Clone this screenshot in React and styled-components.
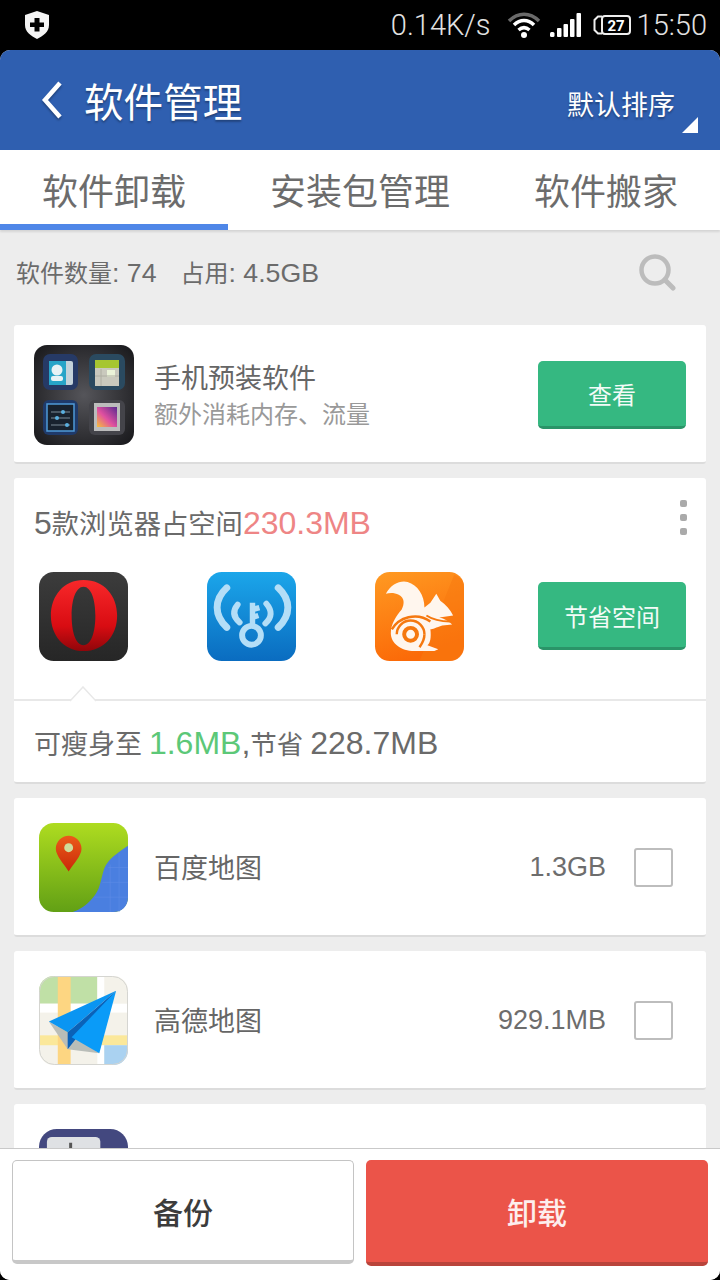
import React from 'react';
import styled, { createGlobalStyle } from 'styled-components';

const GlobalStyle = createGlobalStyle`
    html, body {
        margin: 0;
        padding: 0;
        background: #000;
    }
    * {
        box-sizing: border-box;
    }
`;

const Screen = styled.div`
    width: 720px;
    height: 1280px;
    background: #000;
    display: flex;
    flex-direction: column;
    overflow: hidden;
    font-family: "Liberation Sans", "Noto Sans CJK SC", sans-serif;
`;

const StatusBar = styled.div`
    height: 50px;
    flex: none;
    display: flex;
    align-items: center;
    padding: 0 13px 0 24px;
    color: #e2e2e2;
`;

const StatusText = styled.span`
    font-family: "Roboto", sans-serif;
    font-size: 29px;
    font-weight: 300;
    line-height: 50px;
    margin: ${(p) => p.$margin || '0'};
`;

const StatusIcon = styled.svg`
    display: block;
    flex: none;
    margin: ${(p) => p.$margin || '0'};
`;

const Spacer = styled.div`
    flex: 1;
`;

const Main = styled.div`
    flex: 1;
    min-height: 0;
    display: flex;
    flex-direction: column;
    border-radius: 10px;
    overflow: hidden;
    background: #ededed;
`;

const Header = styled.header`
    height: 100px;
    flex: none;
    background: #2f5fb0;
    display: flex;
    align-items: center;
    padding: 0 22px 0 40px;
    color: #fff;
`;

const BackIcon = styled.svg`
    display: block;
    flex: none;
    filter: drop-shadow(0 2px 1px rgba(0, 0, 0, 0.3));
`;

const Title = styled.h1`
    margin: 6px 0 0 20px;
    font-size: 39.6px;
    font-weight: 400;
    line-height: 94px;
    text-shadow: 0 2px 2px rgba(0, 0, 0, 0.3);
`;

const SortLabel = styled.span`
    font-size: 27px;
    line-height: 36px;
    margin: 12px 7px 0 0;
    text-shadow: 0 2px 2px rgba(0, 0, 0, 0.3);
`;

const SortArrow = styled.svg`
    display: block;
    flex: none;
    margin-top: 50px;
`;

const Tabs = styled.nav`
    position: relative;
    height: 80px;
    flex: none;
    background: #fff;
    display: grid;
    grid-template-columns: 228px 264px 228px;
    box-shadow: 0 2px 2px rgba(0, 0, 0, 0.1);
`;

const Tab = styled.div`
    height: 80px;
    display: flex;
    align-items: center;
    justify-content: center;
    padding-top: 4px;
    font-size: 36px;
    color: #6c6c6c;
    border-bottom: 6px solid ${(p) => (p.$active ? '#4f87e8' : 'transparent')};
`;

const Content = styled.div`
    flex: 1;
    min-height: 0;
    overflow: hidden;
    padding: 0 14px;
    display: flex;
    flex-direction: column;
    gap: 14px;
`;

const Summary = styled.div`
    height: 81px;
    flex: none;
    display: flex;
    align-items: center;
    padding: 2px 30px 0 2px;
    color: #6b6b6b;
    font-size: 26.7px;
`;

const SummaryItem = styled.span`
    margin-right: 24px;
`;

const Cn = styled.span`
    font-size: ${(p) => p.$size}px;
`;

const Card = styled.section`
    flex: none;
    background: #fff;
    border-radius: 3px;
    border-bottom: 2px solid #dcdcdc;
`;

const Row = styled.div`
    height: 137px;
    display: flex;
    align-items: center;
    padding: 2px 33px 0 25px;
`;

const PreRow = styled(Row)`
    padding: 2px 20px 0 20px;
`;

const AppIcon = styled.svg`
    display: block;
    flex: none;
`;

const RowBody = styled.div`
    flex: 1;
    min-width: 0;
    margin-left: ${(p) => p.$left}px;
    padding-top: ${(p) => p.$top || 0}px;
`;

const RowTitle = styled.div`
    font-size: 27px;
    line-height: 38px;
    color: #666;
`;

const RowSub = styled.div`
    font-size: 24px;
    line-height: 34px;
    color: #999;
`;

const Size = styled.span`
    font-size: 27px;
    color: #6d6d6d;
    margin-right: 28px;
`;

const Check = styled.span`
    display: block;
    flex: none;
    width: 39px;
    height: 39px;
    border: 2px solid #bdbdbd;
    border-radius: 3px;
    background: #fff;
`;

const GreenButton = styled.button`
    flex: none;
    width: 148px;
    height: 68px;
    padding: 1px 0 0;
    border: 0;
    border-bottom: 3px solid #2a9468;
    border-radius: 5px;
    background: #35b881;
    color: #f3fbf7;
    font-family: inherit;
    font-size: 24px;
`;

const BrowserHead = styled.div`
    height: 94px;
    display: flex;
    align-items: center;
    justify-content: space-between;
    padding: 0 19px 0 20px;
    font-size: 32px;
    color: #6a6a6a;
`;

const HeadText = styled.span`
    margin-top: -6px;
`;

const Pink = styled.span`
    color: #ee8585;
`;

const Green = styled.span`
    color: #5cc878;
`;

const Dots = styled.div`
    display: flex;
    flex-direction: column;
    gap: 7px;
    margin-top: -16px;
`;

const Dot = styled.span`
    display: block;
    width: 7px;
    height: 7px;
    border-radius: 2px;
    background: #aaa;
`;

const BrowserIcons = styled.div`
    height: 127px;
    display: flex;
    align-items: flex-start;
    padding: 0 20px 0 25px;
    gap: 79px;
`;

const BrowserButton = styled(GreenButton)`
    margin: 10px 0 0 -5px;
`;

const SaveRow = styled.div`
    position: relative;
    height: 83px;
    display: flex;
    align-items: center;
    padding: 2px 20px 0;
    border-top: 2px solid #e8e8e8;
    font-size: 32px;
    color: #6a6a6a;
    word-spacing: -2px;
`;

const Notch = styled.svg`
    position: absolute;
    left: 56px;
    top: -15px;
    display: block;
`;

const BottomBar = styled.div`
    height: 132px;
    flex: none;
    background: #fff;
    border-top: 1px solid #c9c9c9;
    display: grid;
    grid-template-columns: 342px 342px;
    gap: 12px;
    padding: 11px 12px 0;
    align-items: start;
`;

const BackupButton = styled.button`
    height: 104px;
    border: 1px solid #c4c4c4;
    border-bottom: 4px solid #c8c8c8;
    border-radius: 5px;
    background: #fff;
    color: #3c3c3c;
    font-family: inherit;
    font-size: 30px;
    font-weight: 500;
`;

const RemoveButton = styled.button`
    height: 106px;
    border: 0;
    border-bottom: 4px solid #b9443b;
    border-radius: 5px;
    background: #eb5449;
    color: #fdeeed;
    font-family: inherit;
    font-size: 30px;
    font-weight: 500;
`;

const SearchIcon = styled.svg`
    display: block;
    flex: none;
`;

const Shield = () => (
    <StatusIcon width="26" height="28" viewBox="0 0 26 28">
        <path d="M13 0 L25 4 V14 C25 21 19 25 13 28 C7 25 1 21 1 14 V4 Z" fill="#f4f4f4" />
        <path d="M10.5 7 H15.5 V11.5 H20 V16 H15.5 V20.5 H10.5 V16 H6 V11.5 H10.5 Z" fill="#000" />
    </StatusIcon>
);

const Wifi = () => (
    <StatusIcon $margin="0 9px 0 16px" width="34" height="26" viewBox="0 0 34 26">
        <path d="M2 9 C11 0 23 0 32 9" fill="none" stroke="#6a6a6a" strokeWidth="3.5" />
        <path d="M7 13 C13 7 21 7 27 13" fill="none" stroke="#fff" strokeWidth="3.5" />
        <path d="M11.5 18 C15 15 19 15 22.5 18" fill="none" stroke="#fff" strokeWidth="3.5" />
        <circle cx="17" cy="23" r="3" fill="#fff" />
    </StatusIcon>
);

const Signal = () => (
    <StatusIcon $margin="0 12px 0 0" width="31" height="24" viewBox="0 0 31 24">
        <rect x="0" y="19" width="4.5" height="5" rx="1.5" fill="#fff" />
        <rect x="7" y="15" width="4.5" height="9" rx="1" fill="#fff" />
        <rect x="13.5" y="11" width="4.5" height="13" rx="1" fill="#fff" />
        <rect x="20" y="6" width="4.5" height="18" rx="1" fill="#fff" />
        <rect x="26.5" y="0" width="4.5" height="24" rx="1" fill="#fff" />
    </StatusIcon>
);

const Battery = () => (
    <StatusIcon $margin="0 6px 0 0" width="38" height="20" viewBox="0 0 38 20">
        <path d="M9 1.5 H5 L1.5 5 V15 L5 18.5 H9" fill="none" stroke="#eee" strokeWidth="2" />
        <rect x="9" y="1" width="28" height="18" rx="3" fill="none" stroke="#eee" strokeWidth="2" />
        <text x="23" y="15.5" textAnchor="middle" fontSize="15" fontWeight="700" fontFamily="Roboto, sans-serif" fill="#fff">27</text>
    </StatusIcon>
);

const PreloadIcon = () => (
    <AppIcon width="100" height="100" viewBox="0 0 100 100">
        <defs>
            <radialGradient id="preBg" cx="50%" cy="50%" r="70%">
                <stop offset="0" stopColor="#55555a" />
                <stop offset="1" stopColor="#17171a" />
            </radialGradient>
            <linearGradient id="prePic" x1="0" y1="1" x2="1" y2="0">
                <stop offset="0" stopColor="#f5c03a" />
                <stop offset="0.45" stopColor="#e050a0" />
                <stop offset="1" stopColor="#5a2a90" />
            </linearGradient>
        </defs>
        <rect width="100" height="100" rx="13" fill="url(#preBg)" />
        <rect x="9" y="9" width="35" height="36" rx="7" fill="#263a66" />
        <rect x="15" y="16" width="24" height="24" rx="2" fill="#c4d2da" />
        <rect x="15" y="16" width="17" height="24" fill="#27a4c8" />
        <circle cx="23" cy="25" r="5.5" fill="#e8f2f5" />
        <rect x="17" y="31" width="12" height="5" rx="2" fill="#e8f2f5" />
        <rect x="55" y="9" width="36" height="36" rx="7" fill="#2a4a60" />
        <rect x="61" y="15" width="24" height="26" fill="#c9c9bd" />
        <rect x="61" y="15" width="24" height="8" fill="#a6c630" />
        <rect x="73" y="25" width="8" height="7" fill="#eaf3d8" />
        <path d="M67 24 V41 M61 31 H85" stroke="#aeaea2" strokeWidth="1" />
        <rect x="9" y="55" width="35" height="35" rx="6" fill="#1f3a6a" />
        <rect x="13" y="59" width="27" height="27" fill="#18222e" stroke="#4f9bd8" strokeWidth="1.5" />
        <path d="M17 67 H36 M17 73 H36 M17 80 H36" stroke="#7a8a96" strokeWidth="1" />
        <circle cx="29" cy="67" r="2" fill="#5ab0e0" />
        <circle cx="23" cy="73" r="2" fill="#5ab0e0" />
        <circle cx="33" cy="80" r="2" fill="#5ab0e0" />
        <rect x="55" y="55" width="36" height="35" rx="6" fill="#44444a" />
        <rect x="60" y="58" width="26" height="28" fill="#bcbcbc" />
        <rect x="63" y="62" width="20" height="20" fill="url(#prePic)" />
    </AppIcon>
);

const OperaIcon = () => (
    <AppIcon width="89" height="89" viewBox="0 0 90 90">
        <defs>
            <linearGradient id="opBg" x1="0" y1="0" x2="0" y2="1">
                <stop offset="0" stopColor="#3c3c3c" />
                <stop offset="1" stopColor="#262626" />
            </linearGradient>
            <linearGradient id="opRed" x1="0" y1="0" x2="0" y2="1">
                <stop offset="0" stopColor="#f8282a" />
                <stop offset="0.65" stopColor="#d80c12" />
                <stop offset="1" stopColor="#8f060a" />
            </linearGradient>
        </defs>
        <rect width="90" height="90" rx="15" fill="url(#opBg)" />
        <path fillRule="evenodd" fill="url(#opRed)" d="M45 8 C66 8 79 24 79 44 C79 64 66 80 45 80 C25 80 12 64 12 44 C12 24 25 8 45 8 Z M45 15 C37 15 33 29 33 44 C33 60 37 74 45 74 C53 74 57 60 57 44 C57 29 53 15 45 15 Z" />
    </AppIcon>
);

const WifiKeyIcon = () => (
    <AppIcon width="89" height="89" viewBox="0 0 90 90">
        <defs>
            <linearGradient id="wkBg" x1="0" y1="0" x2="0" y2="1">
                <stop offset="0" stopColor="#1ba6ea" />
                <stop offset="1" stopColor="#0a6cc0" />
            </linearGradient>
        </defs>
        <rect width="90" height="90" rx="15" fill="url(#wkBg)" />
        <g fill="none" stroke="#b4def7" strokeLinecap="round">
            <path d="M20 16 C7 28 7 44 20 56" strokeWidth="7" />
            <path d="M72 16 C85 28 85 44 72 56" strokeWidth="7" />
            <path d="M31 33 C26 39 26 45 33 51" strokeWidth="6" />
            <path d="M60 32 C66 39 66 46 59 52" strokeWidth="6" />
            <circle cx="45" cy="64" r="9.5" strokeWidth="6" />
            <path d="M46 31 V54 M46 38 L53 36 M46 46 L52 44" strokeWidth="5.5" strokeLinecap="butt" />
        </g>
    </AppIcon>
);

const UcIcon = () => (
    <AppIcon width="89" height="89" viewBox="0 0 90 90">
        <defs>
            <linearGradient id="ucBg" x1="0" y1="0" x2="0.3" y2="1">
                <stop offset="0" stopColor="#ff9a22" />
                <stop offset="1" stopColor="#fb6a08" />
            </linearGradient>
        </defs>
        <rect width="90" height="90" rx="15" fill="url(#ucBg)" />
        <path d="M90 14 V75 C90 84 84 90 75 90 H45 L80 3 C86 5 90 9 90 14 Z" fill="#f77a10" opacity="0.55" />
        <path d="M11 22 C16 12 26 8 33 10 C43 13 50 23 50 36 L56 31 L62 22 L66 29 C72 33 76 38 79 44 L65 46 C70 47 75 50 78 53 L68 54 C62 56 58 58 56 58 C57 66 56 72 53 74 L64 78 L60 80 H40 C26 80 16 72 16 62 C16 52 22 44 27 38 C30 32 30 26 24 23 C20 21 15 21 11 22 Z" fill="#fff6ee" />
        <g fill="none" stroke="#f5780f">
            <circle cx="36" cy="63" r="6.5" strokeWidth="4" />
            <path d="M22 63 A14 14 0 0 1 50 63" strokeWidth="2.5" />
            <path d="M17 58 C24 46 42 40 56 50" strokeWidth="2.5" />
            <path d="M50 63 C50 68 48 72 45 76" strokeWidth="2.5" />
            <path d="M52 44 C58 48 66 50 76 50" strokeWidth="2" />
        </g>
    </AppIcon>
);

const BaiduIcon = () => (
    <AppIcon width="89" height="89" viewBox="0 0 90 90">
        <defs>
            <linearGradient id="bdGreen" x1="0" y1="0" x2="0" y2="1">
                <stop offset="0" stopColor="#aedc20" />
                <stop offset="1" stopColor="#62a015" />
            </linearGradient>
            <linearGradient id="bdPin" x1="0" y1="0" x2="0" y2="1">
                <stop offset="0" stopColor="#ec5a1a" />
                <stop offset="1" stopColor="#c82a08" />
            </linearGradient>
        </defs>
        <rect width="90" height="90" rx="15" fill="url(#bdGreen)" />
        <path d="M90 23 C80 30 70 36 66 46 C62 58 62 68 54 76 C48 83 42 87 34 90 H75 C84 90 90 84 90 75 Z" fill="#4a7fe0" />
        <path d="M70 45 H90 M64 60 H90 M56 75 H90 M72 42 V90 M81 30 V90" stroke="#5d8ce5" strokeWidth="0.6" />
        <path d="M30 13 C37 13 43 19 43 26 C43 33 35 41 30 49 C25 41 17 33 17 26 C17 19 23 13 30 13 Z" fill="url(#bdPin)" />
        <circle cx="30" cy="25" r="4.5" fill="#cfdc9a" />
    </AppIcon>
);

const GaodeIcon = () => (
    <AppIcon width="89" height="89" viewBox="0 0 90 90">
        <defs>
            <clipPath id="gdClip">
                <rect width="90" height="90" rx="15" />
            </clipPath>
        </defs>
        <g clipPath="url(#gdClip)">
            <rect width="90" height="90" fill="#f4f2ea" />
            <rect x="0" y="0" width="59" height="28" fill="#c0e0a6" />
            <rect x="0" y="28" width="90" height="9" fill="#fff" />
            <rect x="59" y="0" width="7" height="90" fill="#fff" />
            <rect x="0" y="60" width="90" height="10" fill="#fbe89a" />
            <rect x="19" y="0" width="13" height="90" fill="#fdd682" />
            <rect x="66" y="70" width="24" height="20" fill="#aad2f1" />
        </g>
        <rect x="0.5" y="0.5" width="89" height="89" rx="15" fill="none" stroke="#d5d5d0" />
        <path d="M10 46 L29 74 L61 78 L34 60 Z" fill="#b9bdb8" />
        <path d="M78 15 L10 46 L29 57 Z" fill="#0a95f2" />
        <path d="M78 15 L29 57 L29 74 L37 64 Z" fill="#0a62b8" />
        <path d="M78 15 L33 62 L61 78 Z" fill="#0a9bf8" />
    </AppIcon>
);

const KeyboardIcon = () => (
    <AppIcon width="89" height="89" viewBox="0 0 90 90">
        <rect width="90" height="90" rx="18" fill="#43487f" />
        <rect x="8" y="8" width="54" height="44" rx="5" fill="#dfe1e4" />
        <path d="M17 24 H48 M32 14 V30" stroke="#555" strokeWidth="3" />
    </AppIcon>
);

const List = [
    { name: '百度地图', size: '1.3GB', icon: <BaiduIcon /> },
    { name: '高德地图', size: '929.1MB', icon: <GaodeIcon /> },
    { name: '', size: '', icon: <KeyboardIcon /> },
];

const App = () => {
    return (
        <Screen>
            <GlobalStyle />
            <StatusBar>
                <Shield />
                <Spacer />
                <StatusText>0.14K/s</StatusText>
                <Wifi />
                <Signal />
                <Battery />
                <StatusText>15:50</StatusText>
            </StatusBar>
            <Main>
                <Header>
                    <BackIcon width="24" height="40" viewBox="0 0 24 40">
                        <path d="M20 3 L5 20 L20 37" fill="none" stroke="#fff" strokeWidth="4.5" />
                    </BackIcon>
                    <Title>软件管理</Title>
                    <Spacer />
                    <SortLabel>默认排序</SortLabel>
                    <SortArrow width="16" height="16" viewBox="0 0 16 16">
                        <path d="M16 0 V16 H0 Z" fill="#fff" />
                    </SortArrow>
                </Header>
                <Tabs>
                    <Tab $active>软件卸载</Tab>
                    <Tab>安装包管理</Tab>
                    <Tab>软件搬家</Tab>
                </Tabs>
                <Content>
                    <Summary>
                        <SummaryItem><Cn $size={24}>软件数量</Cn>: 74</SummaryItem>
                        <SummaryItem><Cn $size={24}>占用</Cn>: 4.5GB</SummaryItem>
                        <Spacer />
                        <SearchIcon width="38" height="38" viewBox="0 0 38 38">
                            <circle cx="17" cy="17" r="13.5" fill="none" stroke="#bcbcbc" strokeWidth="4.5" />
                            <path d="M27 27 L35 35" stroke="#bcbcbc" strokeWidth="5" strokeLinecap="round" />
                        </SearchIcon>
                    </Summary>
                    <Card>
                        <PreRow>
                            <PreloadIcon />
                            <RowBody $left={20} $top={3}>
                                <RowTitle>手机预装软件</RowTitle>
                                <RowSub>额外消耗内存、流量</RowSub>
                            </RowBody>
                            <GreenButton>查看</GreenButton>
                        </PreRow>
                    </Card>
                    <Card>
                        <BrowserHead>
                            <HeadText>5<Cn $size={27.3}>款浏览器占空间</Cn><Pink>230.3MB</Pink></HeadText>
                            <Dots>
                                <Dot />
                                <Dot />
                                <Dot />
                            </Dots>
                        </BrowserHead>
                        <BrowserIcons>
                            <OperaIcon />
                            <WifiKeyIcon />
                            <UcIcon />
                            <BrowserButton>节省空间</BrowserButton>
                        </BrowserIcons>
                        <SaveRow>
                            <Notch width="26" height="16" viewBox="0 0 26 16">
                                <path d="M0 15 L13 1 L26 15" fill="#fff" stroke="#e8e8e8" strokeWidth="1.5" />
                            </Notch>
                            <span><Cn $size={27}>可瘦身至</Cn> <Green>1.6MB</Green>,<Cn $size={26.5}>节省</Cn> 228.7MB</span>
                        </SaveRow>
                    </Card>
                    {List.map((item, i) => (
                        <Card key={i}>
                            <Row>
                                {item.icon}
                                <RowBody $left={26} $top={2}>
                                    <RowTitle>{item.name}</RowTitle>
                                </RowBody>
                                <Size>{item.size}</Size>
                                {item.size && <Check />}
                            </Row>
                        </Card>
                    ))}
                </Content>
                <BottomBar>
                    <BackupButton>备份</BackupButton>
                    <RemoveButton>卸载</RemoveButton>
                </BottomBar>
            </Main>
        </Screen>
    );
};

export default App;
